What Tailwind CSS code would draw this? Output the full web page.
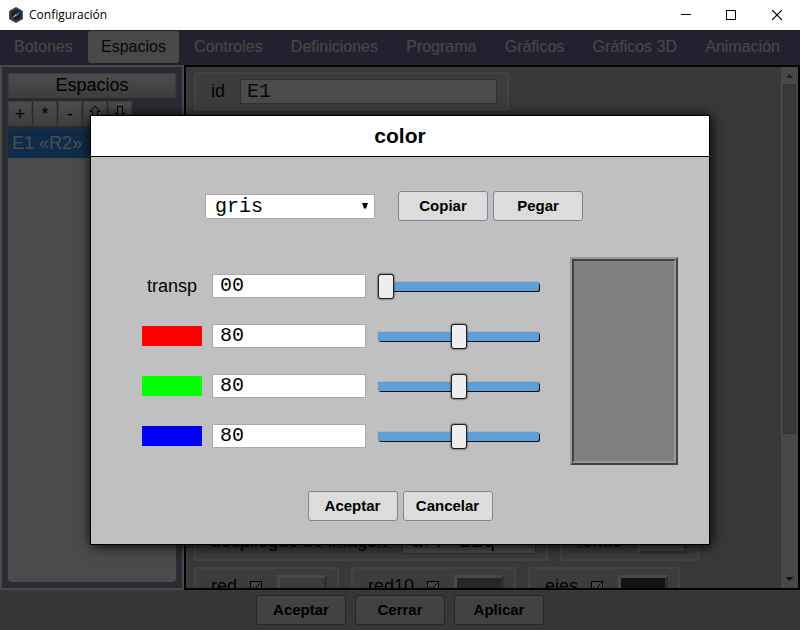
<!DOCTYPE html>
<html lang="es">
<head>
<meta charset="utf-8">
<title>Configuración</title>
<script src="https://cdn.jsdelivr.net/npm/@tailwindcss/browser@4"></script>
</head>
<body class="h-screen flex flex-col overflow-hidden bg-white font-['Liberation_Sans',Arial,sans-serif] text-black">

<header class="h-[30px] shrink-0 flex items-center bg-white pl-2">
  <svg class="size-4" viewBox="0 0 16 16" aria-hidden="true">
    <path d="M8 .5 14.4 4v8L8 15.500 1.600 12V4z" fill="#303540" stroke="#4a4f5c"/>
    <circle cx="8" cy="8" r="5" fill="#1c2027"/>
    <path d="M3.500 11.500 8 7l1.200 1.200z" fill="#b8c4d4"/>
    <path d="M7.500 7.500 12.500 4.500 9 9z" fill="#2f7fe8"/>
  </svg>
  <h1 class="ml-[5px] grow text-[12px] font-['Open_Sans',sans-serif]">Configuración</h1>
  <button aria-label="Minimizar" class="w-[45px] h-[30px] flex items-center justify-center"><svg width="10" height="10" shape-rendering="crispEdges"><path d="M0 4.500h10" stroke="#000"/></svg></button>
  <button aria-label="Maximizar" class="w-[46px] h-[30px] flex items-center justify-center"><svg width="10" height="10" shape-rendering="crispEdges"><path d="M.5 .5h9v9h-9z" fill="none" stroke="#000"/></svg></button>
  <button aria-label="Cerrar ventana" class="w-[46px] h-[30px] flex items-center justify-center"><svg width="10" height="12"><path d="M0 1l10 10M10 1l-10 10" stroke="#000" stroke-width="1.100"/></svg></button>
</header>

<div class="relative grow min-h-0 flex flex-col">
  <nav class="h-[35px] shrink-0 flex justify-between bg-[#7370a0] pl-px pr-[7px] pt-px text-[16px] leading-[32px] text-[#f0f0f0]">
    <a href="#" class="h-8 px-[13px]">Botones</a>
    <a href="#" class="h-8 px-[13px] rounded-[3px] bg-[#f4f4f4] text-[#202020]">Espacios</a>
    <a href="#" class="h-8 px-[13px]">Controles</a>
    <a href="#" class="h-8 px-[13px]">Definiciones</a>
    <a href="#" class="h-8 px-[13px]">Programa</a>
    <a href="#" class="h-8 px-[13px]">Gráficos</a>
    <a href="#" class="h-8 px-[13px] whitespace-nowrap">Gráficos 3D</a>
    <a href="#" class="h-8 px-[13px]">Animación</a>
  </nav>

  <div class="grow min-h-0 flex">
    <aside class="w-[184px] shrink-0 flex flex-col border-2 border-[#f8f8f8] bg-[#8f93aa] p-[6px] text-[18px]">
      <h2 class="h-[25px] shrink-0 border border-[#c8c8c8] bg-[#e8e8e8] bg-linear-to-b from-white to-[#d0d0d0] text-center leading-[23px]">Espacios</h2>
      <div class="mt-[3px] flex gap-px">
        <button class="w-6 h-[25px] border border-[#c8c8c8] bg-linear-to-b from-white to-[#d0d0d0] leading-[22px]">+</button>
        <button class="w-6 h-[25px] border border-[#c8c8c8] bg-linear-to-b from-white to-[#d0d0d0] leading-[22px]">*</button>
        <button class="w-6 h-[25px] border border-[#c8c8c8] bg-linear-to-b from-white to-[#d0d0d0] leading-[22px]">-</button>
        <button aria-label="Subir" class="w-6 h-[25px] border border-[#c8c8c8] bg-linear-to-b from-white to-[#d0d0d0] flex justify-center pt-[3px]"><svg width="12" height="16"><path d="M6 1 11 6.500H8.500V13h-5V6.500H1z" fill="none" stroke="#000"/></svg></button>
        <button aria-label="Bajar" class="w-6 h-[25px] border border-[#c8c8c8] bg-linear-to-b from-white to-[#d0d0d0] flex justify-center pt-[3px]"><svg width="12" height="16"><path d="M6 14 11 8.500H8.500V1.500h-5V8.500H1z" fill="none" stroke="#000"/></svg></button>
      </div>
      <ul class="mt-[3px] grow overflow-hidden rounded-[4px] bg-[#fafafa]">
        <li class="h-[29px] bg-[#3090f0] pl-1 leading-[28px] text-white">E1 «R2»</li>
      </ul>
    </aside>

    <main class="grow min-w-0 flex border-2 border-black bg-[#bebec2] text-[18px]">
      <form class="grow min-w-0 flex flex-col overflow-hidden pl-2 pt-[5px]">
        <div class="flex">
          <div class="h-[39px] flex items-center rounded-[3px] border-2 border-[#e0e0e2] bg-[#c8c8cb] pl-[15px] pr-[10px]">
            <label for="id">id</label>
            <input id="id" value="E1" class="ml-[15px] w-[257px] h-[25px] border border-[#a0a0a0] bg-[#fafafa] px-[6px] font-['Liberation_Mono',monospace] text-[20px] text-[#202020]">
          </div>
        </div>
        <div class="grow"></div>
        <div class="flex shrink-0 gap-3">
          <div class="h-[39px] flex items-center rounded-[3px] border-2 border-[#e0e0e2] bg-[#c8c8cb] pl-[15px] pr-[10px]">
            <label for="desp" class="whitespace-nowrap">despliegue de imagen</label>
            <select id="desp" class="ml-[15px] w-[134px] h-[25px] appearance-none border border-[#a0a0a0] bg-[#fafafa] px-2 font-['Liberation_Mono',monospace] text-[20px] leading-[23px]"><option>arr-izq</option></select>
          </div>
          <div class="h-[39px] flex items-center rounded-[3px] border-2 border-[#e0e0e2] bg-[#c8c8cb] pl-[15px] pr-[10px]">
            <span>fondo</span>
            <button type="button" aria-label="Color de fondo" class="ml-[15px] w-[50px] h-6 border-3 border-t-[#f4f4f4] border-l-[#f4f4f4] border-r-[#a0a0a0] border-b-[#a0a0a0] bg-[#e8e8e8]"></button>
          </div>
        </div>
        <div class="mt-[6px] -mb-[18px] flex shrink-0 gap-3">
          <div class="h-[39px] flex items-center rounded-[3px] border-2 border-[#e0e0e2] bg-[#c8c8cb] pl-[15px] pr-[10px]">
            <label for="red">red</label>
            <span class="relative ml-[13px] size-3"><input id="red" type="checkbox" checked class="block size-3 appearance-none border border-black bg-[#e0e0e0]"><svg class="absolute inset-0 pointer-events-none" width="12" height="12"><path d="M3 6l2 2.500 4.500-6" fill="none" stroke="#000"/></svg></span>
            <button type="button" aria-label="Color de red" class="ml-[15px] w-[50px] h-6 border-3 border-t-[#f4f4f4] border-l-[#f4f4f4] border-r-[#a0a0a0] border-b-[#a0a0a0] bg-[#c8c8c8]"></button>
          </div>
          <div class="h-[39px] flex items-center rounded-[3px] border-2 border-[#e0e0e2] bg-[#c8c8cb] pl-[15px] pr-[10px]">
            <label for="red10">red10</label>
            <span class="relative ml-[13px] size-3"><input id="red10" type="checkbox" checked class="block size-3 appearance-none border border-black bg-[#e0e0e0]"><svg class="absolute inset-0 pointer-events-none" width="12" height="12"><path d="M3 6l2 2.500 4.500-6" fill="none" stroke="#000"/></svg></span>
            <button type="button" aria-label="Color de red10" class="ml-[15px] w-[50px] h-6 border-3 border-t-[#f4f4f4] border-l-[#f4f4f4] border-r-[#a0a0a0] border-b-[#a0a0a0] bg-[#808080]"></button>
          </div>
          <div class="h-[39px] flex items-center rounded-[3px] border-2 border-[#e0e0e2] bg-[#c8c8cb] pl-[15px] pr-[10px]">
            <label for="ejes">ejes</label>
            <span class="relative ml-[13px] size-3"><input id="ejes" type="checkbox" checked class="block size-3 appearance-none border border-black bg-[#e0e0e0]"><svg class="absolute inset-0 pointer-events-none" width="12" height="12"><path d="M3 6l2 2.500 4.500-6" fill="none" stroke="#000"/></svg></span>
            <button type="button" aria-label="Color de ejes" class="ml-[15px] w-[50px] h-6 border-3 border-t-[#f4f4f4] border-l-[#f4f4f4] border-r-[#a0a0a0] border-b-[#a0a0a0] bg-[#404040]"></button>
          </div>
        </div>
      </form>
      <div class="w-[17px] shrink-0 flex flex-col items-center bg-[#f1f1f1]" aria-hidden="true">
        <svg width="17" height="17"><path d="M4.500 11 8.500 7l4 4z" fill="#707070"/></svg>
        <div class="w-[13px] h-[350px] border border-[#a8a8a8] bg-[#bcbcbc]"></div>
        <div class="grow"></div>
        <svg width="17" height="17"><path d="M4.500 6 8.500 10l4-4z" fill="#404040"/></svg>
      </div>
    </main>
  </div>

  <footer class="h-10 shrink-0 flex justify-center gap-[9px] bg-[#b7bac0] pt-[5px] text-[15px] font-bold">
    <button class="w-[90px] h-[30px] rounded-[3px] border border-[#708090] bg-[#dcdcdc]">Aceptar</button>
    <button class="w-[90px] h-[30px] rounded-[3px] border border-[#708090] bg-[#dcdcdc]">Cerrar</button>
    <button class="w-[90px] h-[30px] rounded-[3px] border border-[#708090] bg-[#dcdcdc]">Aplicar</button>
  </footer>

  <div class="absolute inset-0 flex items-center justify-center bg-black/70">
    <section role="dialog" aria-modal="true" aria-labelledby="dlg" class="w-[620px] border border-black bg-[#c0c0c0] shadow-[1px_1px_12px_#000]">
      <h2 id="dlg" class="h-[41px] border-b border-black bg-white text-center text-[21px] leading-[40px] font-bold">color</h2>
      <div class="flex items-center pl-[114px] pt-[34px]">
        <div class="relative">
          <select aria-label="Color" class="block w-[170px] h-[25px] appearance-none border border-[#a9a9a9] bg-white px-[9px] font-['Liberation_Mono',monospace] text-[20px] leading-[23px]"><option>gris</option></select>
          <svg class="absolute right-[7px] top-[9px] pointer-events-none" width="6" height="6"><path d="M0 0h6L4 5.500H2z" fill="#000"/></svg>
        </div>
        <button class="ml-[23px] w-[90px] h-[30px] rounded-[3px] border border-[#778899] bg-[#dcdcdc] text-[15px] font-bold">Copiar</button>
        <button class="ml-[5px] w-[90px] h-[30px] rounded-[3px] border border-[#778899] bg-[#dcdcdc] text-[15px] font-bold">Pegar</button>
      </div>
      <div class="flex pl-[51px] pt-[36px]">
        <div class="grid grid-cols-[60px_154px_163px] grid-rows-[repeat(4,24px)] items-center gap-x-[10px] gap-y-[26px] pt-[17px]">
          <label for="t" class="text-center text-[18px]">transp</label>
          <input id="t" value="00" class="h-6 border border-[#a9a9a9] bg-white px-[7px] font-['Liberation_Mono',monospace] text-[20px]">
          <input type="range" min="0" max="255" value="0" aria-label="Nivel transp" class="w-[161px] h-[26px] ml-[2px] appearance-none bg-transparent [&::-webkit-slider-runnable-track]:h-[9px] [&::-webkit-slider-runnable-track]:rounded-[2px] [&::-webkit-slider-runnable-track]:bg-[#5f9fd8] [&::-webkit-slider-runnable-track]:shadow-[1px_1px_0_#101010,0_0_1px_#404040] [&::-webkit-slider-thumb]:appearance-none [&::-webkit-slider-thumb]:w-4 [&::-webkit-slider-thumb]:h-[25px] [&::-webkit-slider-thumb]:-mt-[8px] [&::-webkit-slider-thumb]:rounded-[3px] [&::-webkit-slider-thumb]:border [&::-webkit-slider-thumb]:border-[#202020] [&::-webkit-slider-thumb]:bg-[#eeeeee] [&::-webkit-slider-thumb]:shadow-[0_0_2px_#000]">
          <label for="r" aria-label="Rojo" class="h-5 bg-[#ff0000]"></label>
          <input id="r" value="80" class="h-6 border border-[#a9a9a9] bg-white px-[7px] font-['Liberation_Mono',monospace] text-[20px]">
          <input type="range" min="0" max="255" value="128" aria-label="Nivel rojo" class="w-[161px] h-[26px] ml-[2px] appearance-none bg-transparent [&::-webkit-slider-runnable-track]:h-[9px] [&::-webkit-slider-runnable-track]:rounded-[2px] [&::-webkit-slider-runnable-track]:bg-[#5f9fd8] [&::-webkit-slider-runnable-track]:shadow-[1px_1px_0_#101010,0_0_1px_#404040] [&::-webkit-slider-thumb]:appearance-none [&::-webkit-slider-thumb]:w-4 [&::-webkit-slider-thumb]:h-[25px] [&::-webkit-slider-thumb]:-mt-[8px] [&::-webkit-slider-thumb]:rounded-[3px] [&::-webkit-slider-thumb]:border [&::-webkit-slider-thumb]:border-[#202020] [&::-webkit-slider-thumb]:bg-[#eeeeee] [&::-webkit-slider-thumb]:shadow-[0_0_2px_#000]">
          <label for="g" aria-label="Verde" class="h-5 bg-[#00ff00]"></label>
          <input id="g" value="80" class="h-6 border border-[#a9a9a9] bg-white px-[7px] font-['Liberation_Mono',monospace] text-[20px]">
          <input type="range" min="0" max="255" value="128" aria-label="Nivel verde" class="w-[161px] h-[26px] ml-[2px] appearance-none bg-transparent [&::-webkit-slider-runnable-track]:h-[9px] [&::-webkit-slider-runnable-track]:rounded-[2px] [&::-webkit-slider-runnable-track]:bg-[#5f9fd8] [&::-webkit-slider-runnable-track]:shadow-[1px_1px_0_#101010,0_0_1px_#404040] [&::-webkit-slider-thumb]:appearance-none [&::-webkit-slider-thumb]:w-4 [&::-webkit-slider-thumb]:h-[25px] [&::-webkit-slider-thumb]:-mt-[8px] [&::-webkit-slider-thumb]:rounded-[3px] [&::-webkit-slider-thumb]:border [&::-webkit-slider-thumb]:border-[#202020] [&::-webkit-slider-thumb]:bg-[#eeeeee] [&::-webkit-slider-thumb]:shadow-[0_0_2px_#000]">
          <label for="b" aria-label="Azul" class="h-5 bg-[#0000ff]"></label>
          <input id="b" value="80" class="h-6 border border-[#a9a9a9] bg-white px-[7px] font-['Liberation_Mono',monospace] text-[20px]">
          <input type="range" min="0" max="255" value="128" aria-label="Nivel azul" class="w-[161px] h-[26px] ml-[2px] appearance-none bg-transparent [&::-webkit-slider-runnable-track]:h-[9px] [&::-webkit-slider-runnable-track]:rounded-[2px] [&::-webkit-slider-runnable-track]:bg-[#5f9fd8] [&::-webkit-slider-runnable-track]:shadow-[1px_1px_0_#101010,0_0_1px_#404040] [&::-webkit-slider-thumb]:appearance-none [&::-webkit-slider-thumb]:w-4 [&::-webkit-slider-thumb]:h-[25px] [&::-webkit-slider-thumb]:-mt-[8px] [&::-webkit-slider-thumb]:rounded-[3px] [&::-webkit-slider-thumb]:border [&::-webkit-slider-thumb]:border-[#202020] [&::-webkit-slider-thumb]:bg-[#eeeeee] [&::-webkit-slider-thumb]:shadow-[0_0_2px_#000]">
        </div>
        <div class="ml-[31px] w-[108px] h-[208px] border-2 border-t-[#999] border-l-[#999] border-r-[#444] border-b-[#444]">
          <div class="h-full border-2 border-t-[#444] border-l-[#444] border-r-[#999] border-b-[#999] bg-[#808080]"></div>
        </div>
      </div>
      <div class="flex justify-center gap-[5px] pt-[26px] pb-[23px] text-[15px] font-bold">
        <button class="w-[90px] h-[30px] rounded-[3px] border border-[#778899] bg-[#dcdcdc]">Aceptar</button>
        <button class="w-[90px] h-[30px] rounded-[3px] border border-[#778899] bg-[#dcdcdc]">Cancelar</button>
      </div>
    </section>
  </div>
</div>
</body>
</html>
